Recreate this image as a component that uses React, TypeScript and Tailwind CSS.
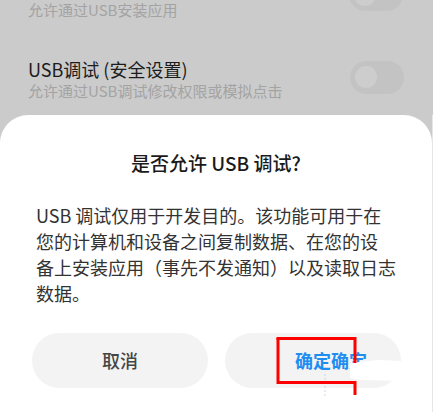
import React from 'react';

const font = { fontFamily: '"Noto Sans CJK SC", "Noto Sans", sans-serif' };

function Toggle({ className }: { className?: string }) {
  return (
    <div className={`w-[54px] h-[33px] rounded-full bg-[#c3c3c3] flex items-center px-[5px] ${className ?? ''}`}>
      <div className="w-[22px] h-[22px] rounded-full bg-[#cdcdcd]" />
    </div>
  );
}

export default function App() {
  return (
    <div className="relative w-[433px] h-[412px] bg-[#cbcbcb] overflow-hidden flex flex-col" style={font}>
      {/* settings list behind the dialog */}
      <div className="relative h-[115px] shrink-0">
        <div className="flex items-start justify-between pl-[28px] pr-[30px] -mt-[22px]">
          <div className="pt-[22px] text-[15px] leading-[20px] text-[#a3a3a3]">允许通过USB安装应用</div>
          <Toggle />
        </div>
        <div className="flex items-center justify-between pl-[28px] pr-[29px] mt-[37px]">
          <div className="flex flex-col">
            <div className="text-[18px] leading-[24px] text-[#1c1c1c]">USB调试 (安全设置)</div>
            <div className="text-[15px] leading-[20px] text-[#a3a3a3]">允许通过USB调试修改权限或模拟点击</div>
          </div>
          <Toggle className="-mt-[4px]" />
        </div>
      </div>

      {/* dialog */}
      <div className="flex-1 flex">
        <div className="w-[432px] bg-white rounded-t-[28px] flex flex-col">
          <div className="pt-[35px] text-center text-[19px] leading-[26px] font-medium text-[#1a1a1a]">
            是否允许 USB 调试?
          </div>
          <div className="mt-[26px] pl-[36px] text-[18px] leading-[26px] text-[#333333] whitespace-nowrap">
            USB 调试仅用于开发目的。该功能可用于在<br />
            您的计算机和设备之间复制数据、在您的设<br />
            备上安装应用（事先不发通知）以及读取日志<br />
            数据。
          </div>
          <div className="mt-[27px] pl-[32px] flex gap-[17px]">
            <div className="w-[176px] h-[55px] rounded-full bg-[#f3f3f3] flex items-center justify-center text-[18px] font-medium text-[#454545]">
              取消
            </div>
            <div className="w-[176px] h-[55px] rounded-full bg-[#f3f3f3] flex items-center pl-[70px] text-[18px] font-bold text-[#1f8ef1] whitespace-nowrap overflow-hidden">
              确定确定
            </div>
          </div>
        </div>
        <div className="flex-1 bg-[#e6e6e6]" />
      </div>

      {/* screenshot markup overlays */}
      <svg className="absolute left-0 top-0" width="433" height="412" viewBox="0 0 433 412">
        <polygon points="350,363 378,360 404,361 412,371 404,381 362,380 350,378" fill="#ffffff" />
        <line x1="325" y1="374" x2="325" y2="396" stroke="#c9d6e4" strokeWidth="1" strokeDasharray="2 2" />
        <path d="M276.5 338.5 H355 V363" fill="none" stroke="#ff0000" strokeWidth="3" />
        <path d="M278 338 V382.5 H355 V395" fill="none" stroke="#ff0000" strokeWidth="3" />
      </svg>
    </div>
  );
}
